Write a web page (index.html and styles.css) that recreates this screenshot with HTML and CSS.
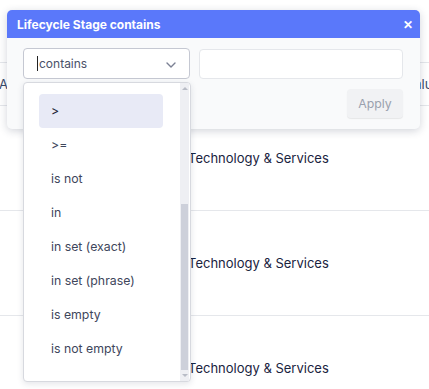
FILE: index.html
```html
<!DOCTYPE html>
<html lang="en">
<head>
  <meta charset="UTF-8" />
  <meta name="viewport" content="width=device-width, initial-scale=1.0">
  <title>Lifecycle Stage filter</title>
  <link rel="stylesheet" href="styles.css">
</head>
<body>
  <table class="grid">
    <tr class="head-row">
      <th class="col-a">Account</th>
      <th class="col-b">Industry</th>
      <th class="col-c">Value</th>
    </tr>
    <tr class="row">
      <td class="col-a"></td>
      <td class="col-b">Technology &amp; Services</td>
      <td class="col-c"></td>
    </tr>
    <tr class="row">
      <td class="col-a"></td>
      <td class="col-b">Technology &amp; Services</td>
      <td class="col-c"></td>
    </tr>
    <tr class="row">
      <td class="col-a"></td>
      <td class="col-b">Technology &amp; Services</td>
      <td class="col-c"></td>
    </tr>
  </table>

  <div class="dialog">
    <div class="dialog-head">
      <span>Lifecycle Stage contains</span>
      <span class="close">&#x2715;</span>
    </div>
    <div class="dialog-body">
      <div class="fields">
        <div class="select">
          <span class="caret"></span>contains
          <svg class="chevron" width="10" height="6" viewBox="0 0 10 6"><path d="M1 1l4 4 4-4" fill="none" stroke="#7b8194" stroke-width="1.4" stroke-linecap="round" stroke-linejoin="round"/></svg>
        </div>
        <input class="value" type="text" />
      </div>
      <div class="actions">
        <button class="apply">Apply</button>
      </div>
    </div>
  </div>

  <div class="menu">
    <ul class="options">
      <li class="active">&gt;</li>
      <li>&gt;=</li>
      <li>is not</li>
      <li>in</li>
      <li>in set (exact)</li>
      <li>in set (phrase)</li>
      <li>is empty</li>
      <li>is not empty</li>
    </ul>
    <div class="scrollbar">
      <span class="arrow up"></span>
      <div class="track"><div class="thumb"></div></div>
      <span class="arrow down"></span>
    </div>
  </div>
</body>
</html>
```

FILE: styles.css
```css
body {
  margin: 0;
  background-color: #ffffff;
  font-family: Inter, "Noto Sans", sans-serif;
  color: #1f2a44;
  width: 429px;
  height: 389px;
  overflow: hidden;
  position: relative;
}
.grid {
  border-collapse: collapse;
  margin-top: 62px;
  margin-left: -1px;
  width: 460px;
  font-size: 13px;
}
.grid th,
.grid td {
  padding: 0;
  text-align: left;
  white-space: nowrap;
}
.head-row {
  height: 43px;
  border-top: 1px solid #e5e7eb;
  border-bottom: 1px solid #e5e7eb;
}
.head-row th {
  font-weight: 400;
  color: #3b4a6b;
}
.row {
  height: 105px;
  border-bottom: 1px solid #e5e7eb;
}
.row td {
  color: #1a2340;
}
.col-a { width: 189px; }
.col-b { width: 218px; }

/* filter dialog */
.dialog {
  position: absolute;
  left: 7px;
  top: 10px;
  width: 413px;
  border-radius: 5px;
  background-color: #f9fafb;
  box-shadow: 0 2px 9px rgba(30, 40, 70, 0.2);
  overflow: hidden;
}
.dialog-head {
  height: 28px;
  background-color: #5a78fa;
  color: white;
  font-size: 12px;
  font-weight: 700;
  display: flex;
  align-items: center;
  justify-content: space-between;
  padding: 0 7px 0 10px;
}
.close {
  font-size: 12px;
  font-weight: 700;
}
.dialog-body {
  padding: 10px 17px 11px 16px;
}
.fields {
  display: flex;
  gap: 9px;
}
.select {
  width: 152px;
  height: 29px;
  border: 1px solid #c5c8d2;
  border-radius: 4px;
  background-color: white;
  display: flex;
  align-items: center;
  padding-left: 13px;
  font-size: 12px;
  color: #4a5168;
  position: relative;
}
.caret {
  width: 1px;
  height: 15px;
  background-color: #222;
  margin-right: 1px;
}
.chevron {
  position: absolute;
  right: 13px;
  top: 13px;
}
.value {
  flex: 1;
  height: 28px;
  margin-top: 1px;
  border: 1px solid #e5e7eb;
  border-radius: 4px;
  background-color: white;
  padding: 0;
}
.actions {
  display: flex;
  justify-content: flex-end;
  margin-top: 10px;
}
.apply {
  width: 56px;
  height: 29px;
  border: none;
  border-radius: 4px;
  background-color: #f1f2f4;
  box-shadow: 0 1px 1px rgba(0, 0, 0, 0.08);
  color: #9aa1ae;
  font-family: Inter, sans-serif;
  font-size: 12.3px;
}

/* operator dropdown */
.menu {
  position: absolute;
  left: 23px;
  top: 82px;
  width: 166px;
  height: 298px;
  border: 1px solid #d7d9df;
  border-radius: 4px;
  background-color: white;
  box-shadow: 0 2px 6px rgba(30, 40, 70, 0.12);
  display: flex;
}
.options {
  list-style: none;
  margin: 0;
  padding: 11px 17px 0 15px;
  flex: 1;
}
.options li {
  height: 34px;
  line-height: 34px;
  padding-left: 12px;
  border-radius: 4px;
  font-size: 12.3px;
  color: #3e465b;
}
.options li.active {
  background-color: #e8eaf6;
  color: #1f2637;
}
.scrollbar {
  width: 9px;
  margin: 0 1px 0 0;
  background-color: #eeeff3;
  display: flex;
  flex-direction: column;
  align-items: center;
}
.track {
  flex: 1;
  width: 100%;
  display: flex;
  flex-direction: column;
  justify-content: flex-end;
}
.thumb {
  height: 166px;
  margin: 0 1px;
  background-color: #cdd0da;
}
.arrow {
  width: 0;
  height: 0;
  border-left: 3px solid transparent;
  border-right: 3px solid transparent;
  margin: 4px 0;
}
.arrow.up {
  border-bottom: 3px solid #b8bcc6;
}
.arrow.down {
  border-top: 3px solid #b8bcc6;
}
```
